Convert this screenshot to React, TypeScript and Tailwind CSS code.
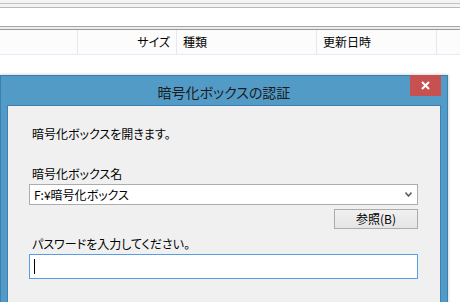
import React from 'react';

const jp = "font-['Noto_Sans_CJK_JP','Noto_Sans',sans-serif] [font-feature-settings:'palt']";

const App = () => {
  return (
    <div className={`w-[460px] h-[302px] overflow-hidden bg-white text-black ${jp}`}>
      {/* Explorer toolbar remnants */}
      <div className="h-[3px] bg-[#f3f3f3]" />
      <div className="h-px bg-[#c4c4c4]" />
      <div className="h-[3px] bg-[#f3f3f3]" />
      <div className="h-px bg-[#b9b9b9]" />
      <div className="h-[18px] bg-white" />
      <div className="h-px bg-[#a8a8a8]" />
      <div className="h-[2px] bg-[#ececec]" />
      <div className="h-px bg-[#9a9a9a]" />

      {/* Column header */}
      <div className="flex h-[25px] bg-[#fcfcfc] border-b border-[#e3ebf8] text-[12px] leading-[24px]">
        <div className="w-[78px] border-r border-[#e3e9f3]" />
        <div className="w-[99px] border-r border-[#e3e9f3] pr-[6px] text-right">サイズ</div>
        <div className="w-[140px] border-r border-[#e3e9f3] pl-[6px]">種類</div>
        <div className="w-[120px] border-r border-[#e3e9f3] pl-[6px]">更新日時</div>
        <div className="flex-1" />
      </div>

      {/* Dialog */}
      <div className="mt-[20px] w-[448px] border border-b-0 border-[#3d7db0] bg-[#539bc7] shadow-[0_0_3px_rgba(0,0,0,0.25)]">
        <div className="relative h-[29px] flex items-center justify-center">
          <span className="text-[14px] leading-[20px] text-[#1b1b1b] mt-[2px]">暗号化ボックスの認証</span>
          <button className="absolute right-[6px] top-[-1px] w-[31px] h-[21px] bg-[#c75050] flex items-center justify-center">
            <svg width="9" height="9" viewBox="0 0 9 9">
              <path d="M1 1L8 8M8 1L1 8" stroke="white" strokeWidth="2" />
            </svg>
          </button>
        </div>
        <div className="px-[6px]">
          <div className="h-[200px] border border-b-0 border-[#3f80b2] bg-[#f0f0f0] pl-[21px] pt-[20px] text-[12px] leading-[16px]">
            <div className="ml-[3px]">暗号化ボックスを開きます。</div>
            <div className="ml-[3px] mt-[24px]">暗号化ボックス名</div>
            <div className="mt-[2px] w-[389px] h-[21px] border border-[#acacac] bg-white flex items-center pl-[4px] pr-[5px]">
              <span className="flex-1 leading-[16px]">F:¥暗号化ボックス</span>
              <svg width="7" height="5" viewBox="0 0 7 5">
                <path d="M0.5 0.5L3.5 4L6.5 0.5" stroke="#606060" strokeWidth="1.6" fill="none" />
              </svg>
            </div>
            <div className="w-[389px] flex justify-end mt-[4px]">
              <button className="w-[84px] h-[20px] border border-[#acacac] bg-gradient-to-b from-[#f0f0f0] to-[#e5e5e5] text-[12px] leading-[16px] flex items-center justify-center">
                参照(B)
              </button>
            </div>
            <div className="ml-[3px] mt-[7px]">パスワードを入力してください。</div>
            <div className="mt-[2px] w-[389px] h-[25px] border border-[#569de5] bg-white flex items-center pl-[4px]">
              <div className="w-px h-[15px] bg-black" />
            </div>
          </div>
        </div>
      </div>
    </div>
  );
};

export default App;
